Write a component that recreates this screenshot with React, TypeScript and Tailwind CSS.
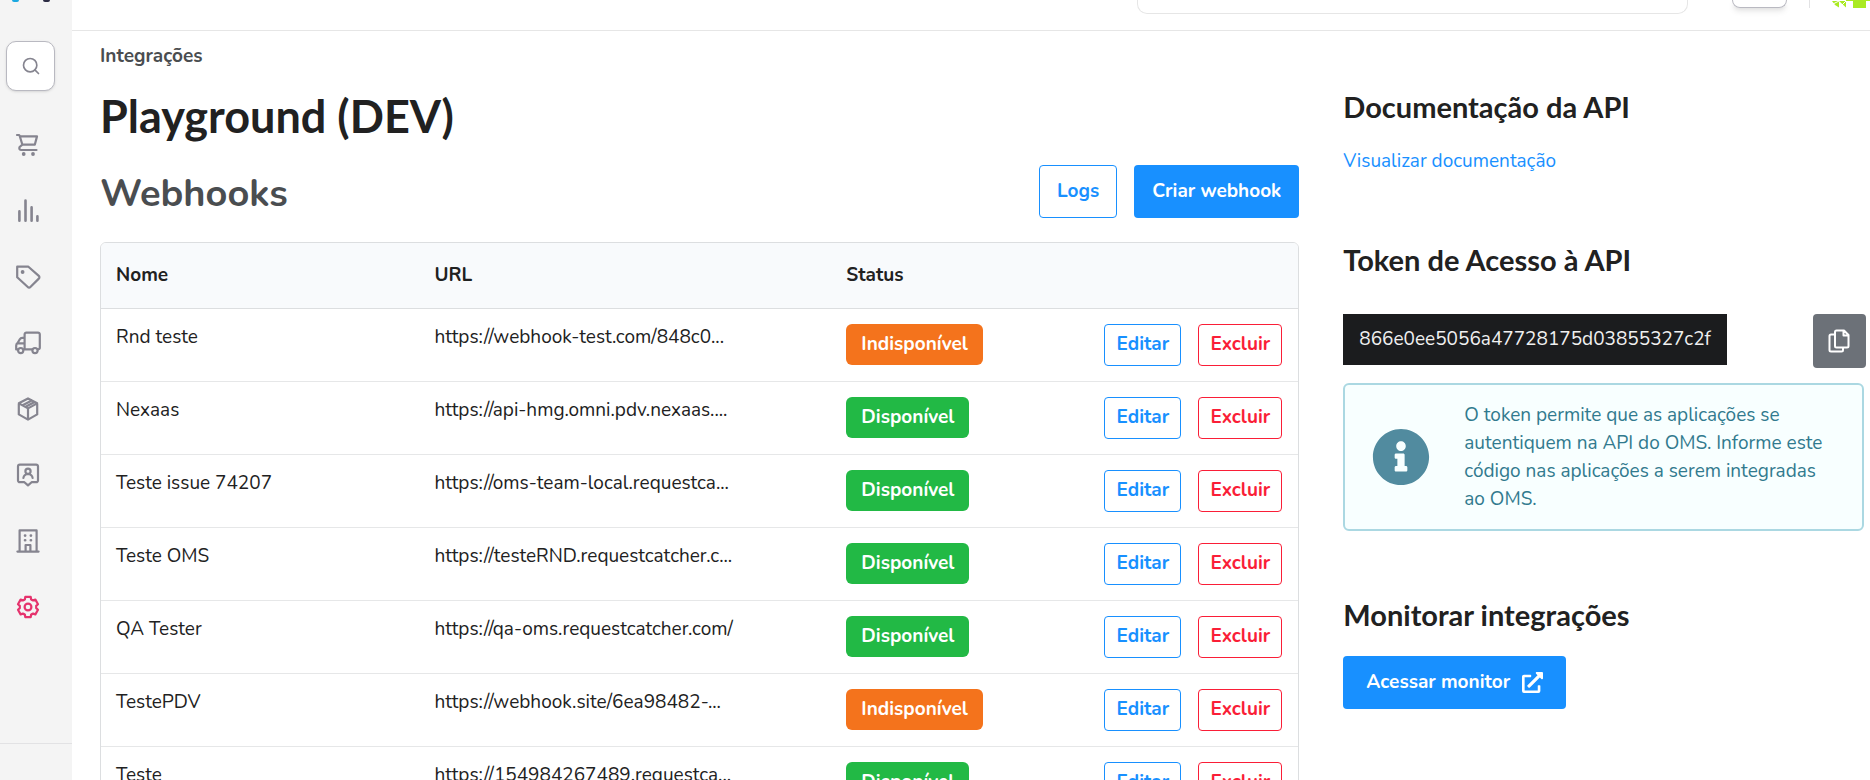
import React from 'react';
import { Search } from 'lucide-react';
import { FaExternalLinkAlt, FaInfoCircle } from 'react-icons/fa';

const webhooks = [
  { name: 'Rnd teste', url: 'https://webhook-test.com/848c0...', available: false },
  { name: 'Nexaas', url: 'https://api-hmg.omni.pdv.nexaas....', available: true },
  { name: 'Teste issue 74207', url: 'https://oms-team-local.requestca...', available: true },
  { name: 'Teste OMS', url: 'https://testeRND.requestcatcher.c...', available: true },
  { name: 'QA Tester', url: 'https://qa-oms.requestcatcher.com/', available: true },
  { name: 'TestePDV', url: 'https://webhook.site/6ea98482-...', available: false },
  { name: 'Teste', url: 'https://154984267489.requestca...', available: true },
];

function Icon({ children }: { children: React.ReactNode }) {
  return (
    <svg width="26" height="24" viewBox="-1 0 26 24" fill="none" stroke="currentColor" strokeWidth="2.2" strokeLinecap="round" strokeLinejoin="round">
      {children}
    </svg>
  );
}

const menu = [
  {
    label: 'Pedidos',
    icon: (
      <Icon>
        <path d="M1 2H3L4.2 3.4H21L18.8 11.7H6.4L3.8 3.2M6.4 11.7L3.6 14Q2.6 16.6 5 17H20.5" />
        <circle cx="7.7" cy="21" r="1.9" fill="currentColor" stroke="none" />
        <circle cx="17" cy="21" r="1.9" fill="currentColor" stroke="none" />
      </Icon>
    ),
  },
  {
    label: 'Relatórios',
    icon: (
      <Icon>
        <path strokeWidth="2.6" d="M3.4 12.4V21.8M9.5 1.6V21.8M15.6 8.4V21.8M21.4 17.2V21.8" />
      </Icon>
    ),
  },
  {
    label: 'Produtos',
    icon: (
      <Icon>
        <path d="M1.2 1.7H12.4L22.8 10.9A1.8 1.8 0 0 1 22.8 13.6L14.4 22A1.8 1.8 0 0 1 11.8 22L1.2 12.2Z" />
        <circle cx="6.6" cy="7" r="1.9" fill="currentColor" stroke="none" />
      </Icon>
    ),
  },
  {
    label: 'Entregas',
    icon: (
      <Icon>
        <path d="M8.6 17V3.4A1.8 1.8 0 0 1 10.4 1.6H22A1.8 1.8 0 0 1 23.8 3.4V16.6A1.8 1.8 0 0 1 22.2 18.4M8.6 6.8H6.2Q4.6 6.8 3.8 8.2L1.6 12Q.2 13 .2 14.6V18.4H1.6M8.6 12.4H1.6M7.8 18.4H15.6" />
        <circle cx="4.7" cy="19.6" r="2.6" />
        <circle cx="19" cy="19.6" r="2.6" />
      </Icon>
    ),
  },
  {
    label: 'Estoque',
    icon: (
      <Icon>
        <path d="M12 1.4L21.2 6.2V17.4L12 22.6L2.8 17.4V6.2ZM2.8 6.4L12 11.4L21.2 6.4M12 11.4V22.4M6.6 8.2L15.8 3.4M9.6 9.8L18.6 5" />
      </Icon>
    ),
  },
  {
    label: 'Clientes',
    icon: (
      <Icon>
        <path d="M3.8 1.6H20.2A1.8 1.8 0 0 1 22 3.4V17.4A1.8 1.8 0 0 1 20.2 19.2H15.6L12 22.4L8.4 19.2H3.8A1.8 1.8 0 0 1 2 17.4V3.4A1.8 1.8 0 0 1 3.8 1.6Z" />
        <circle cx="12" cy="8.2" r="2.6" />
        <path d="M7.4 15Q7.8 11.4 12 11Q16.2 11.4 16.6 15" />
      </Icon>
    ),
  },
  {
    label: 'Empresa',
    icon: (
      <Icon>
        <path d="M1.4 22.6H22.6M3.6 22.6V1.4H20.6V22.6M9.6 22V16H14.4V22" />
        <path strokeWidth="2.6" d="M9 6.6H9.2M14.8 6.6H15M9 11.2H9.2M14.8 11.2H15" />
      </Icon>
    ),
  },
];

function Sidebar() {
  return (
    <aside className="flex w-[72px] shrink-0 flex-col bg-[#f4f4f4] text-[#85848f]">
      <div className="flex h-[41px] items-start justify-between pl-3 pr-[22px]">
        <span className="h-[2px] w-[7px] rounded-b-[2px] bg-[#1ba8e0]" />
        <span className="h-[2px] w-[7px] rounded-b-[2px] bg-[#2c2c44]" />
      </div>
      <button aria-label="Buscar" className="ml-[6px] flex h-[50px] w-[49px] items-center justify-center rounded-[10px] border border-[#b9b9c1] bg-white shadow-sm">
        <Search size={20} strokeWidth={2} />
      </button>
      <nav className="mt-[21px] flex flex-1 flex-col">
        {menu.map((item) => (
          <a key={item.label} href="#" aria-label={item.label} className="flex h-[66px] w-14 items-center justify-center">
            {item.icon}
          </a>
        ))}
        <a href="#" aria-label="Configurações" className="flex h-[66px] w-14 items-center justify-center text-[#e5336d]">
          <Icon>
            <path d="M9.3 1.9H14.7L15.1 4.3Q16 5 17.1 5.4L19.4 4.6L22 9.3L20.2 10.9V13.1L22 14.7L19.4 19.4L17.1 18.6Q16 19 15.1 19.7L14.7 22.1H9.3L8.9 19.7Q8 19 6.9 18.6L4.6 19.4L2 14.7L3.8 13.1V10.9L2 9.3L4.6 4.6L6.9 5.4Q8 5 8.9 4.3Z" />
            <circle cx="12" cy="12" r="3.4" />
          </Icon>
        </a>
      </nav>
      <div className="h-[37px] border-t border-[#e2e2e4]" />
    </aside>
  );
}

function Topbar() {
  return (
    <header className="flex h-[31px] shrink-0 items-start justify-end border-b border-[#e6e6e6]">
      <input aria-label="Pesquisar" className="h-[14px] w-[551px] rounded-b-[10px] border border-t-0 border-[#e6e6e6]" />
      <button aria-label="Notificações" className="ml-11 h-2 w-[55px] rounded-b-[10px] border border-t-0 border-[#b9b9c1] shadow-md" />
      <span className="ml-[22px] h-2 w-px bg-[#e2e2e4]" />
      <svg className="ml-[22px]" width="38" height="8" viewBox="0 0 38 8" fill="#aaea22">
        <path d="M0 1H7V7.6Q2 5 0 1ZM7 1H14V7.6ZM14 0H38V1H14ZM21 1H34V8H21Z" />
        <path d="M7 1L1 4M14 1L8 7" stroke="#fff" />
      </svg>
    </header>
  );
}

function WebhooksTable() {
  return (
    <div className="mt-6 overflow-hidden rounded-t-md border border-[#dcdee0]">
      <table className="w-full table-fixed text-left text-[19px]/[27px]">
        <thead className="bg-[#f8fafc]">
          <tr className="h-[65px] border-b border-[#dcdee0]">
            <th className="w-[26.6%] px-[15px] font-bold">Nome</th>
            <th className="w-[34.4%] px-[15px] font-bold">URL</th>
            <th className="w-[18%] px-[15px] font-bold">Status</th>
            <th className="w-[21%]" aria-label="Ações" />
          </tr>
        </thead>
        <tbody>
          {webhooks.map((webhook) => (
            <tr key={webhook.name} className="h-[73px] border-b border-[#e6e7e8] align-top">
              <td className="px-[15px] pt-[15px]">{webhook.name}</td>
              <td className="truncate px-[15px] pt-[15px]">{webhook.url}</td>
              <td className="px-[15px] pt-[15px]">
                <span className={`inline-flex h-[41px] items-center rounded-md px-[15px] font-bold text-white ${webhook.available ? 'bg-[#22b945]' : 'bg-[#f4731c]'}`}>
                  {webhook.available ? 'Disponível' : 'Indisponível'}
                </span>
              </td>
              <td className="px-4 pt-[15px]">
                <div className="flex justify-end gap-[17px]">
                  <button className="h-[42px] w-[77px] rounded border border-[#1890ff] font-bold text-[#1890ff]">Editar</button>
                  <button className="h-[42px] w-[84px] rounded border border-[#fa1e37] font-bold text-[#fa1e37]">Excluir</button>
                </div>
              </td>
            </tr>
          ))}
        </tbody>
      </table>
    </div>
  );
}

function SideInfo() {
  return (
    <section className="pt-[58px]">
      <h3 className="font-[Lato] text-[29px]/[36px] font-bold">Documentação da API</h3>
      <a href="#" className="mt-[23px] block text-[19px]/[27px] text-[#1890ff]">Visualizar documentação</a>

      <h3 className="mt-[67px] font-[Lato] text-[29px]/[36px] font-bold">Token de Acesso à API</h3>
      <div className="mr-[2px] mt-9 flex items-start justify-between">
        <code className="bg-[#1b1c1e] px-4 py-3 font-[inherit] text-[19px]/[27px] text-[#f0f0f0]">866e0ee5056a47728175d03855327c2f</code>
        <button aria-label="Copiar token" className="flex h-[54px] w-[53px] items-center justify-center rounded bg-[#6c7178] text-white">
          <svg width="22" height="24" viewBox="0 0 22 24" fill="none" stroke="currentColor" strokeWidth="2" strokeLinejoin="round">
            <path d="M8.5 1.5H16L20.5 6V17A1.5 1.5 0 0 1 19 18.5H8.5A1.5 1.5 0 0 1 7 17V3A1.5 1.5 0 0 1 8.5 1.5ZM15.5 1.5V6.5H20.5M7 5.5H3A1.5 1.5 0 0 0 1.5 7V21A1.5 1.5 0 0 0 3 22.5H13.5A1.5 1.5 0 0 0 15 21V18.5" />
          </svg>
        </button>
      </div>
      <div role="note" className="mr-1 mt-[15px] flex items-center rounded-md border-2 border-[#abd8e2] bg-[#f8ffff] py-4 pl-[27px] pr-6 text-[#317a8e]">
        <FaInfoCircle className="h-[58px] w-[58px] shrink-0 text-[#518b9f]" />
        <p className="ml-[34px] text-[19px]/[28px]">
          O token permite que as aplicações se autentiquem na API do OMS. Informe este código nas aplicações a serem integradas ao OMS.
        </p>
      </div>

      <h3 className="mt-[66px] font-[Lato] text-[29px]/[36px] font-bold">Monitorar integrações</h3>
      <a href="#" className="mt-[23px] inline-flex h-[53px] items-center gap-3 rounded bg-[#1890ff] px-[23px] text-[19px] font-bold text-white">
        Acessar monitor
        <FaExternalLinkAlt size={21} />
      </a>
    </section>
  );
}

export default function App() {
  return (
    <div className="flex h-screen overflow-hidden bg-white font-['Nunito','Open_Sans',sans-serif] text-[#212121]">
      <Sidebar />
      <div className="flex min-w-0 flex-1 flex-col">
        <Topbar />
        <main className="grid min-h-0 flex-1 grid-cols-[minmax(0,16fr)_minmax(0,7fr)] gap-11 pl-7 pr-[2px]">
          <section>
            <a href="#" className="mt-3 block text-[19px]/[27px] font-bold text-[#4a4d50]">Integrações</a>
            <h1 className="mt-[19px] font-[Lato] text-[45px]/[54px] font-bold">Playground (DEV)</h1>
            <div className="mt-[22px] flex items-center justify-between">
              <h2 className="pt-1 text-[38px]/[48px] font-bold text-[#4a4d50]">Webhooks</h2>
              <div className="flex gap-[17px] text-[19px] font-bold">
                <a href="#" className="flex h-[53px] items-center rounded border border-[#1890ff] px-[17px] text-[#1890ff]">Logs</a>
                <button className="h-[53px] rounded bg-[#1890ff] px-[18px] text-white">Criar webhook</button>
              </div>
            </div>
            <WebhooksTable />
          </section>
          <SideInfo />
        </main>
      </div>
    </div>
  );
}
